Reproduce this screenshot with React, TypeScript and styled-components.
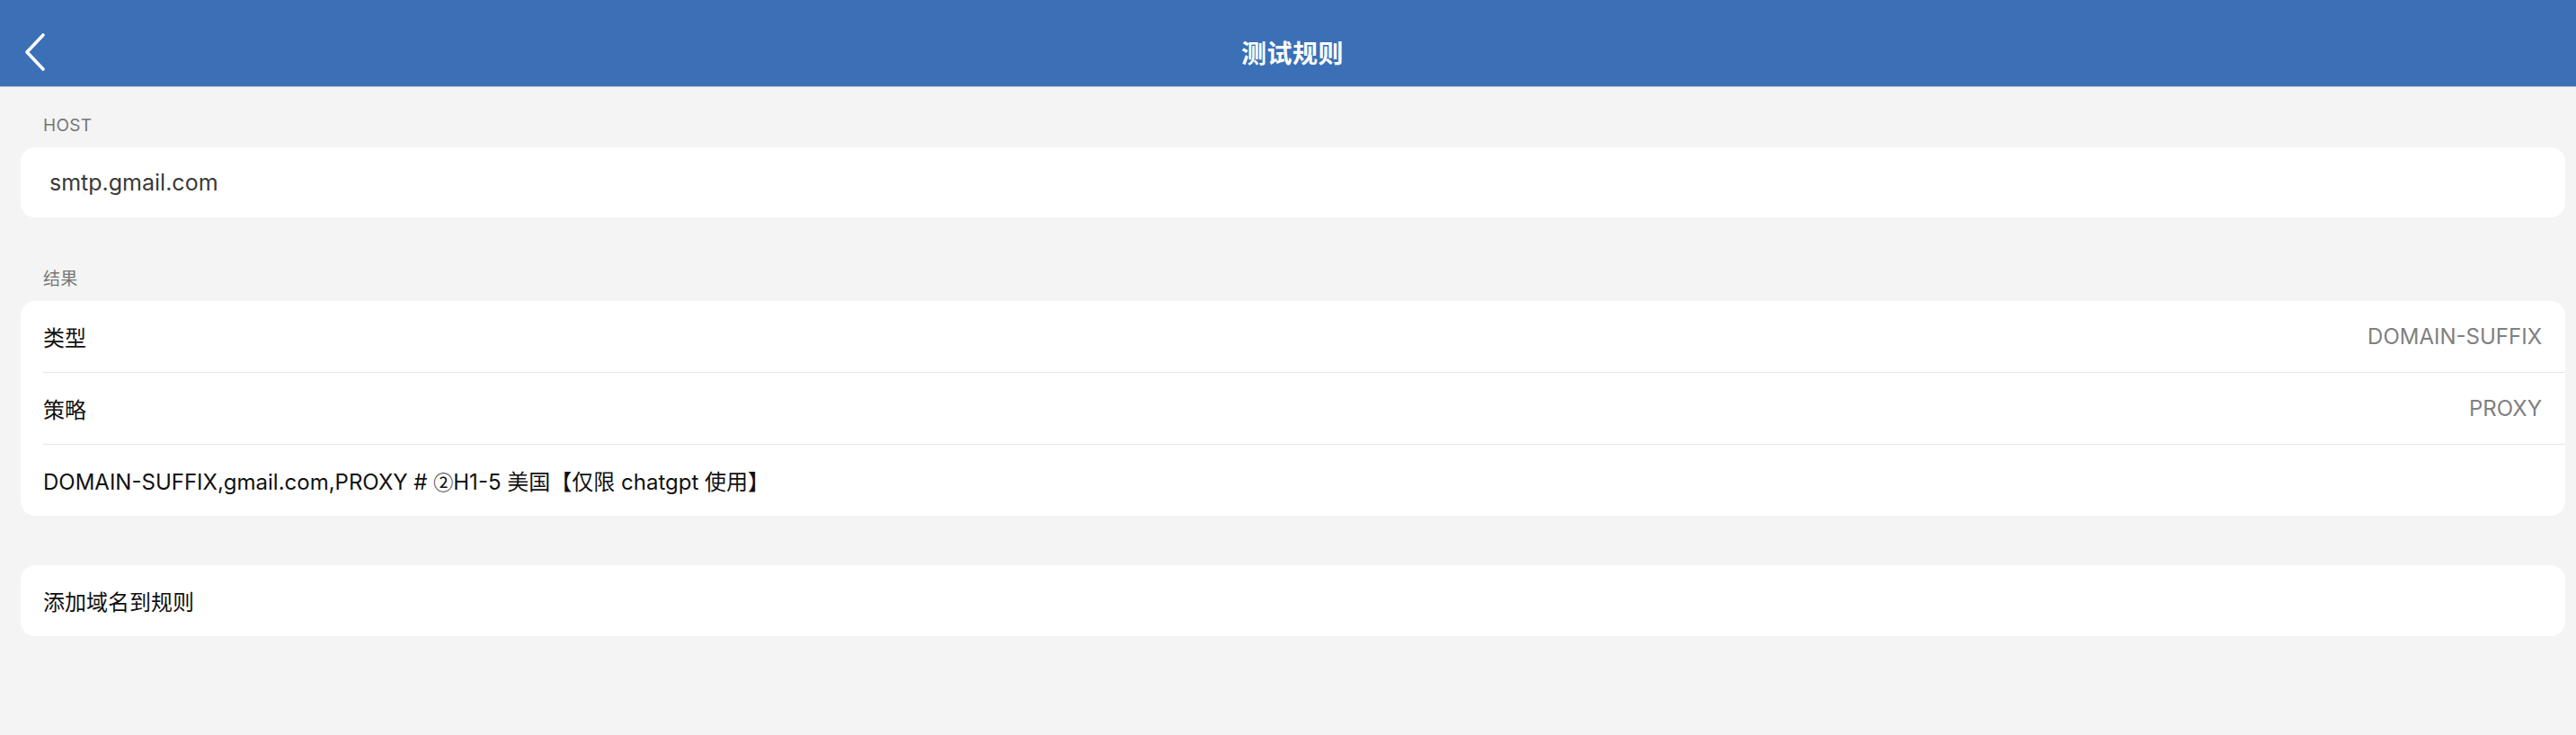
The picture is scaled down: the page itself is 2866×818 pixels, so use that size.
import React from "react";
import styled, { createGlobalStyle } from "styled-components";

const GlobalStyle = createGlobalStyle`
  html, body {
    margin: 0;
    padding: 0;
    background: #f4f4f4;
  }
  body {
    font-family: Inter, "Noto Sans CJK SC", "Noto Sans", sans-serif;
    -webkit-font-smoothing: antialiased;
  }
`;

const Page = styled.div`
  min-height: 818px;
  background: #f4f4f4;
  display: flex;
  flex-direction: column;
`;

const NavBar = styled.header`
  height: 97px;
  box-sizing: border-box;
  padding-top: 20px;
  background: #3b70b7;
  border-bottom: 1px solid #c4c8cf;
  display: grid;
  grid-template-columns: 200px 1fr 200px;
  align-items: center;
`;

const BackButton = styled.button`
  justify-self: start;
  margin-left: 22px;
  width: 36px;
  height: 50px;
  padding: 0;
  border: none;
  background: transparent;
  display: flex;
  align-items: center;
  justify-content: center;
  cursor: pointer;
`;

const Title = styled.h1`
  margin: 0;
  text-align: center;
  color: #ffffff;
  font-family: "Noto Sans CJK SC", sans-serif;
  font-size: 28px;
  font-weight: 700;
  letter-spacing: 0.5px;
  transform: translateX(5px);
`;

const Content = styled.main`
  display: flex;
  flex-direction: column;
  padding: 0 12px 0 23px;
`;

const Section = styled.section<{ $top: number }>`
  display: flex;
  flex-direction: column;
  margin-top: ${(p) => p.$top}px;
`;

const SectionLabel = styled.div`
  padding-left: 25px;
  height: 24px;
  line-height: 24px;
  margin-bottom: 12px;
  color: #777777;
  font-size: 19px;
  letter-spacing: 0.3px;
`;

const Card = styled.div`
  background: #ffffff;
  border-radius: 16px;
  overflow: hidden;
  display: flex;
  flex-direction: column;
`;

const InputRow = styled.div`
  height: 78px;
  display: flex;
  align-items: center;
  padding: 0 32px;
  color: #3a3a3a;
  font-size: 25px;
`;

const Row = styled.div<{ $divider?: boolean }>`
  height: 79px;
  display: flex;
  align-items: center;
  justify-content: space-between;
  margin-left: 25px;
  padding-right: 26px;
  border-top: ${(p) => (p.$divider ? "1px solid #e8e8e8" : "none")};
  font-size: 24px;
`;

const RowLabel = styled.span`
  color: #111111;
`;

const RowValue = styled.span`
  color: #808080;
`;

const Circled = styled.span`
  font-family: "Noto Sans CJK SC", sans-serif;
  font-size: 22px;
`;

const BackIcon = () => (
  <svg width="26" height="44" viewBox="0 0 26 44" fill="none">
    <path
      d="M21 3 L3 22 L21 41"
      stroke="#ffffff"
      strokeWidth="3.6"
      strokeLinecap="round"
      strokeLinejoin="round"
    />
  </svg>
);

export default function App() {
  return (
    <>
      <GlobalStyle />
      <Page>
        <NavBar>
          <BackButton aria-label="返回">
            <BackIcon />
          </BackButton>
          <Title>测试规则</Title>
          <div />
        </NavBar>
        <Content>
          <Section $top={31}>
            <SectionLabel>HOST</SectionLabel>
            <Card>
              <InputRow>smtp.gmail.com</InputRow>
            </Card>
          </Section>
          <Section $top={57}>
            <SectionLabel>结果</SectionLabel>
            <Card>
              <Row>
                <RowLabel>类型</RowLabel>
                <RowValue>DOMAIN-SUFFIX</RowValue>
              </Row>
              <Row $divider>
                <RowLabel>策略</RowLabel>
                <RowValue>PROXY</RowValue>
              </Row>
              <Row $divider>
                <RowLabel>
                  DOMAIN-SUFFIX,gmail.com,PROXY # <Circled>②</Circled>H1-5 美国【仅限 chatgpt 使用】
                </RowLabel>
              </Row>
            </Card>
          </Section>
          <Section $top={55}>
            <Card>
              <Row>
                <RowLabel>添加域名到规则</RowLabel>
              </Row>
            </Card>
          </Section>
        </Content>
      </Page>
    </>
  );
}
